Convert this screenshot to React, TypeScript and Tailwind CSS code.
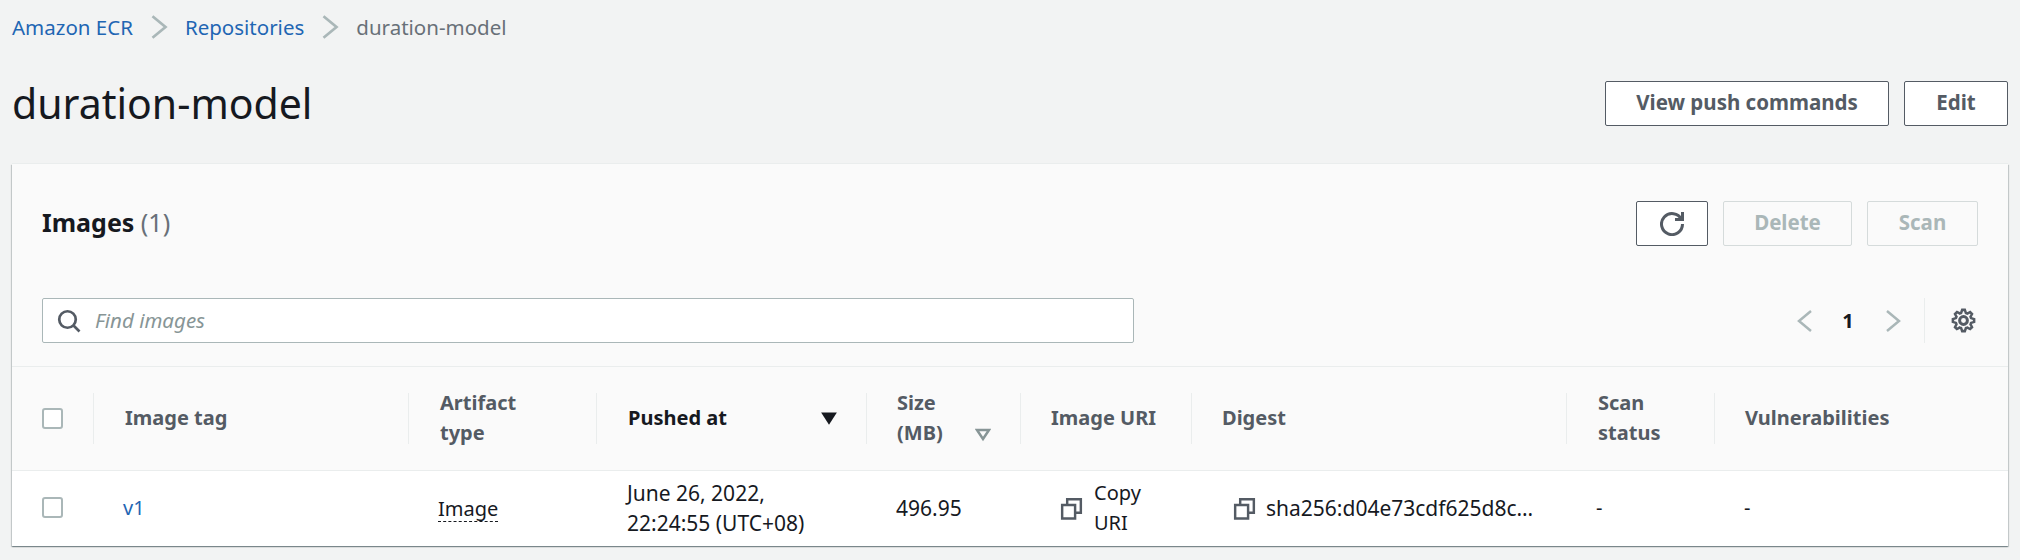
const F = "font-['Noto_Sans',sans-serif]";
const Chevron = ({ dir = 'right', className = '' }: { dir?: 'left' | 'right'; className?: string }) => (
  <svg viewBox="0 0 16 24" className={className} fill="none" stroke="currentColor" strokeWidth="2.5">
    <path d={dir === 'right' ? 'M2 2l12 10L2 22' : 'M14 2L2 12l12 10'} />
  </svg>
);
const Copy = () => (
  <svg viewBox="0 0 16 16" className="w-[23px] h-[23px] shrink-0 text-[#545b64]" fill="none" stroke="currentColor" strokeWidth="1.7">
    <path d="M1.5 5.5h9v9.5h-9z" /><path d="M5 5.5V1.5h9.5v9.5h-4" />
  </svg>
);
const Btn = ({ children, w, disabled }: { children: React.ReactNode; w: string; disabled?: boolean }) => (
  <button className={`${w} h-[45px] flex items-center justify-center rounded-[2px] border pb-[2px] text-[20.5px] font-bold ${disabled ? 'border-[#d5dbdb] text-[#aab7b8]' : 'border-[#545b64] text-[#545b64] bg-white'}`}>{children}</button>
);
const Box = () => <span className="block w-[21px] h-[21px] rounded-[3px] border-2 border-[#aab7b8] bg-white" />;
const cols = 'grid grid-cols-[81px_315px_188px_270px_154px_171px_375px_148px_1fr]';
const Head = ({ children, cls = '' }: { children: React.ReactNode; cls?: string }) => (
  <div className="flex items-center"><div className={`w-full h-[51px] border-l border-[#eaeded] pl-[31px] flex items-center text-[20px] leading-[30px] font-bold text-[#545b64] ${cls}`}>{children}</div></div>
);
const Cell = ({ children, cls = '' }: { children: React.ReactNode; cls?: string }) => (
  <div className={`flex items-center pl-[30px] text-[20px] leading-[30px] text-[#16191f] ${cls}`}>{children}</div>
);
export default function App() {
  return (
    <div className={`${F} w-[2020px] h-[560px] bg-[#f2f3f3] px-3 overflow-hidden`}>
      <div className="h-[54px] flex items-center text-[20.5px]">
        <span className="text-[#1f66b3]">Amazon ECR</span>
        <Chevron className="w-[18px] h-[26px] mx-[17px] text-[#aab7b8]" />
        <span className="text-[#1f66b3]">Repositories</span>
        <Chevron className="w-[18px] h-[26px] mx-[17px] text-[#aab7b8]" />
        <span className="text-[#687078]">duration-model</span>
      </div>
      <div className="h-[110px] flex items-start pt-[27px] justify-between">
        <h1 className="text-[41px] leading-[45px] text-[#16191f]">duration-model</h1>
        <div className="flex gap-[15px]">
          <Btn w="w-[284px]">View push commands</Btn>
          <Btn w="w-[104px]">Edit</Btn>
        </div>
      </div>
      <div className="bg-white h-[382px] shadow-[0_-1px_0_0_#eaeded,0_1px_1px_0_rgba(0,28,36,0.3),1px_1px_1px_0_rgba(0,28,36,0.15),-1px_1px_1px_0_rgba(0,28,36,0.15)]">
        <div className="h-[203px] bg-[#fafafa] border-b border-[#eaeded] flex flex-col">
          <div className="h-[134px] pt-[36px] pl-[30px] pr-[30px] flex items-start justify-between">
            <div className="text-[25px] leading-[45px] font-bold text-[#16191f]">Images <span className="font-normal text-[#687078]">(1)</span></div>
            <div className="flex gap-[15px] pt-px">
              <Btn w="w-[72px]">
                <svg viewBox="0 0 16 16" className="w-6 h-6 mt-[2px]" fill="none" stroke="currentColor" strokeWidth="2"><path d="M10 5h5V0" /><path d="M15 8a7 7 0 1 1-.7-3" /></svg>
              </Btn>
              <Btn w="w-[129px]" disabled>Delete</Btn>
              <Btn w="w-[111px]" disabled>Scan</Btn>
            </div>
          </div>
          <div className="flex items-center justify-between pl-[30px] pr-[32px]">
            <div className="w-[1092px] h-[45px] bg-white border border-[#aab7b8] rounded-[2px] flex items-center pl-[14px] gap-[14px]">
              <svg viewBox="0 0 16 16" className="w-[24px] h-[24px] text-[#545b64]" fill="none" stroke="currentColor" strokeWidth="1.8"><circle cx="7" cy="7" r="5.5" /><path d="M15 15l-4-4" /></svg>
              <span className="italic text-[20.5px] text-[#879596]">Find images</span>
            </div>
            <div className="flex items-center h-[45px]">
              <Chevron dir="left" className="w-[16px] h-[24px] text-[#aab7b8]" />
              <span className="w-[72px] text-center pr-[2px] text-[20px] font-bold text-[#16191f]">1</span>
              <Chevron className="w-[16px] h-[24px] text-[#aab7b8]" />
              <div className="w-px h-[45px] bg-[#eaeded] ml-[23px] mr-[26px]" />
              <svg viewBox="0 0 16 16" className="w-[25px] h-[25px] text-[#545b64]" fill="none" stroke="currentColor" strokeWidth="1.9"><path d="M13.3 5.2l1.1-2.1L13 1.7l-2.1 1.1c-.3-.2-.7-.3-1.1-.4L9 0H7l-.8 2.3c-.3.1-.7.2-1 .4L3.1 1.6 1.6 3.1l1.1 2.1c-.2.3-.3.7-.4 1L0 7v2l2.3.8c.1.4.3.7.4 1.1l-1.1 2.1 1.4 1.4 2.1-1.1c.3.2.7.3 1.1.4L7 16h2l.8-2.3c.4-.1.7-.3 1.1-.4l2.1 1.1 1.4-1.4-1.1-2.1c.2-.3.3-.7.4-1.1L16 9V7l-2.3-.8c-.1-.3-.2-.7-.4-1z" transform="translate(1.2 1.2) scale(.85)" /><circle cx="8" cy="8" r="2.5" /></svg>
            </div>
          </div>
        </div>
        <div className={`${cols} h-[104px] pb-px bg-[#fafafa] border-b border-[#eaeded]`}>
          <div className="flex items-center pl-[30px]"><Box /></div>
          <Head>Image tag</Head>
          <Head><span className="w-[90px]">Artifact type</span></Head>
          <Head cls="text-[#16191f] justify-between pr-[28px]"><span>Pushed at</span><svg viewBox="0 0 16 16" className="w-[18px] h-[18px] text-[#16191f]" fill="currentColor"><path d="M1 3h14L8 14z" /></svg></Head>
          <Head cls="relative !pl-[30px]"><span className="w-[60px]">Size (MB)</span><svg viewBox="0 0 16 16" className="absolute right-[29px] bottom-[2px] w-[16px] h-[16px] text-[#879596]" fill="none" stroke="currentColor" strokeWidth="2.5"><path d="M2 4h12L8 13z" /></svg></Head>
          <Head cls="!pl-[30px]">Image URI</Head>
          <Head cls="!pl-[30px]">Digest</Head>
          <Head><span className="w-[70px]">Scan status</span></Head>
          <Head cls="!pl-[30px]">Vulnerabilities</Head>
        </div>
        <div className={`${cols} h-[74px]`}>
          <div className="flex items-center pl-[30px] pb-[2px]"><Box /></div>
          <Cell><span className="text-[#1f66b3]">v1</span></Cell>
          <Cell cls="pt-[2px]"><span className="border-b border-dashed border-[#16191f] leading-[24px]">Image</span></Cell>
          <Cell cls="!pl-[31px] !text-[21px]"><span className="w-[200px]">June 26, 2022, 22:24:55 (UTC+08)</span></Cell>
          <Cell cls="!text-[21px]">496.95</Cell>
          <Cell cls="!pl-[40px] gap-[11px]"><Copy /><span className="w-[50px]">Copy URI</span></Cell>
          <Cell cls="!pl-[42px] gap-[10px]"><Copy /><span className="whitespace-nowrap text-[21px]">sha256:d04e73cdf625d8c…</span></Cell>
          <Cell>-</Cell>
          <Cell>-</Cell>
        </div>
      </div>
    </div>
  );
}
